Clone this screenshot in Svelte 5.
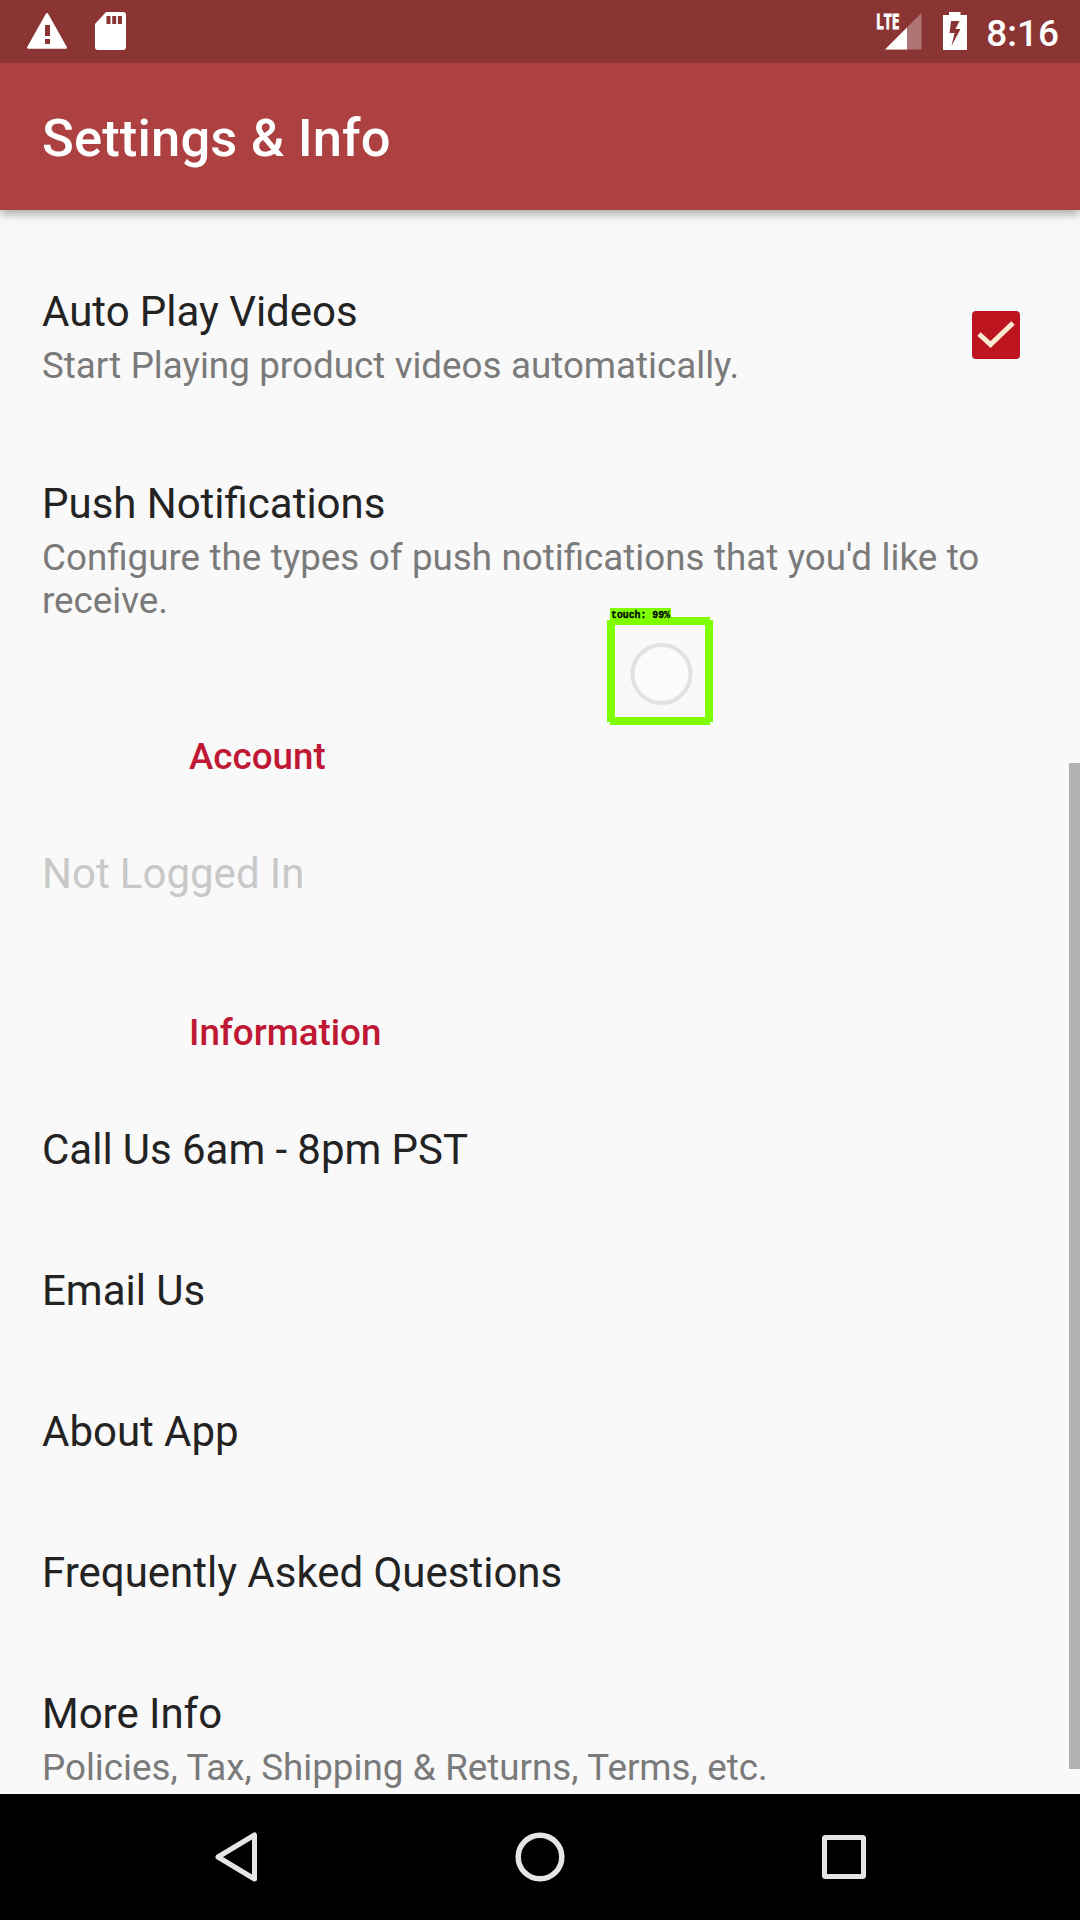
<script>
  const sections = [
    {
      heading: null,
      items: [
        { title: 'Auto Play Videos', summary: ['Start Playing product videos automatically.'], checked: true },
        { title: 'Push Notifications', summary: ["Configure the types of push notifications that you'd like to", 'receive.'] }
      ]
    },
    { heading: 'Account', items: [{ title: 'Not Logged In', disabled: true }] },
    {
      heading: 'Information',
      items: [
        { title: 'Call Us 6am - 8pm PST' },
        { title: 'Email Us' },
        { title: 'About App' },
        { title: 'Frequently Asked Questions' },
        { title: 'More Info', summary: ['Policies, Tax, Shipping & Returns, Terms, etc.'] }
      ]
    }
  ];
</script>

<div class="screen">
  <div class="status">
    <div class="group">
      <svg class="warn" width="40" height="36" viewBox="0 0 40 36">
        <path fill="#fff" fill-rule="evenodd" d="M19 .6q1-1.2 2 0L39.8 34q.4 1.6-1 1.8H1.200Q-.2 35.600.2 34ZM18 12v11h5V12Zm0 14v5h5v-5Z" />
      </svg>
      <svg class="sd" width="31" height="38" viewBox="0 0 31 38">
        <path fill="#fff" fill-rule="evenodd" d="M11 0h17q3 0 3 3v32q0 3-3 3H3q-3 0-3-3V12ZM11.500 4v8h4V4Zm5.700 0v8h4V4Zm5.700 0v8h4V4Z" />
      </svg>
    </div>
    <div class="group">
      <svg class="signal" width="47" height="42" viewBox="0 -4 47 42">
        <path fill="#fff" fill-opacity=".32" d="M45.500 0v36.500H9Z" />
        <path fill="#8a3433" d="M0 0h26v17H0Z" />
        <path fill="#fff" d="M31 14.500v22H9Z" />
        <text x="0" y="15.800" textLength="23.500" lengthAdjust="spacingAndGlyphs">LTE</text>
      </svg>
      <svg class="battery" width="24" height="38" viewBox="0 0 24 38">
        <path fill="#fff" fill-rule="evenodd" d="M6 0h11.500v3H24v35H0V3H6ZM8 9 6.500 21h5L8.500 34 17.500 17h-5L16.500 9Z" />
      </svg>
      <span class="time">8:16</span>
    </div>
  </div>

  <header><h1>Settings &amp; Info</h1></header>

  <main>
    {#each sections as section}
      {#if section.heading}
        <h2>{section.heading}</h2>
      {/if}
      {#each section.items as item}
        <div class="row" class:disabled={item.disabled}>
          <div class="copy">
            <div class="title">{item.title}</div>
            {#if item.summary}
              <div class="summary">
                {#each item.summary as line}<div>{line}</div>{/each}
              </div>
            {/if}
          </div>
          {#if item.checked}
            <svg class="check" width="48" height="48" viewBox="0 0 48 48">
              <rect width="48" height="48" rx="4" fill="#bd1620" />
              <path d="M7 23 18.500 33.500 41 12" fill="none" stroke="#fce9d2" stroke-width="5" />
            </svg>
          {/if}
        </div>
      {/each}
    {/each}
    <div class="scrollbar"></div>
  </main>

  <nav>
    <svg width="50" height="54" viewBox="0 0 50 54">
      <path d="M43.500 5v44L7 27Z" fill="none" stroke="#e5e5e5" stroke-width="5" stroke-linejoin="round" />
    </svg>
    <svg width="50" height="54" viewBox="0 0 50 54">
      <circle cx="25" cy="27" r="21.800" fill="none" stroke="#e5e5e5" stroke-width="5.500" />
    </svg>
    <svg width="50" height="54" viewBox="0 0 50 54">
      <rect x="5.500" y="7.500" width="39" height="39" rx="1" fill="none" stroke="#e5e5e5" stroke-width="5" stroke-linejoin="round" />
    </svg>
  </nav>

  <div class="touch">
    <svg width="108" height="120" viewBox="0 0 108 120">
      <circle cx="54.500" cy="67" r="29" fill="#fbfbfb" stroke="#e2e2e4" stroke-width="4" />
      <path d="M3 10h100v3h3v102h-3v3H3v-3H0V13h3ZM8 18v92h90V18Z" fill="#80ff00" fill-rule="evenodd" />
      <path d="M3 1h61v11H3Z" fill="#80ff00" />
      <text x="4" y="10.500" textLength="59" lengthAdjust="spacingAndGlyphs">touch: 99%</text>
    </svg>
  </div>
</div>

<style>
  :global(body) {
    margin: 0;
    background: #f9f9f9;
  }
  .screen {
    position: relative;
    display: flex;
    flex-direction: column;
    width: 1080px;
    height: 1920px;
    overflow: hidden;
    background: #f9f9f9;
    font-family: Roboto, 'Liberation Sans', sans-serif;
  }
  svg {
    display: block;
    flex: none;
  }
  .status {
    position: relative;
    z-index: 2;
    display: flex;
    justify-content: space-between;
    box-sizing: border-box;
    flex: none;
    height: 63px;
    padding: 12px 21px 0 27px;
    background: #8a3433;
  }
  .group {
    display: flex;
    align-items: flex-start;
  }
  .warn {
    margin: 1px 28px 0 0;
  }
  .signal {
    margin: -3px 20px 0 0;
    overflow: visible;
  }
  .signal text {
    font: 700 21px 'Open Sans', sans-serif;
    fill: #fff;
    stroke: #fff;
    stroke-width: 0.8px;
  }
  .battery {
    margin-right: 19px;
  }
  .time {
    color: #fff;
    font-size: 37px;
    font-weight: 500;
    line-height: 43px;
  }
  header {
    position: relative;
    z-index: 1;
    display: flex;
    align-items: center;
    box-sizing: border-box;
    flex: none;
    height: 147px;
    padding: 3px 0 0 42px;
    background: #ad4141;
    box-shadow: 0 4px 9px rgba(0, 0, 0, 0.32);
  }
  h1 {
    margin: 0;
    color: #fff;
    font-size: 52.5px;
    font-weight: 500;
    letter-spacing: 0.15px;
    line-height: 62px;
  }
  main {
    position: relative;
    flex: 1;
    min-height: 0;
    box-sizing: border-box;
    padding-top: 31px;
    overflow: hidden;
  }
  .row {
    display: flex;
    align-items: center;
    justify-content: space-between;
    padding: 46px 60px 46px 42px;
  }
  .check {
    margin-bottom: 4px;
  }
  .copy {
    white-space: nowrap;
  }
  .title {
    color: #232323;
    font-size: 42px;
    line-height: 49px;
    word-spacing: -0.2px;
  }
  .disabled .title {
    color: #c8c8c8;
  }
  .summary {
    margin-top: 8px;
    color: #7a7a7a;
    font-size: 36.75px;
    line-height: 43px;
    word-spacing: 0.35px;
  }
  h2 {
    margin: 0;
    padding: 67px 0 25px 189px;
    color: #bf1834;
    font-size: 36.75px;
    font-weight: 500;
    line-height: 43px;
  }
  .scrollbar {
    position: absolute;
    top: 553px;
    right: 0;
    width: 11px;
    height: 1006px;
    background: #b2b2b2;
  }
  nav {
    display: flex;
    align-items: center;
    justify-content: space-between;
    box-sizing: border-box;
    flex: none;
    height: 126px;
    padding: 0 211px;
    background: #000;
  }
  .touch {
    position: absolute;
    left: 607px;
    top: 607px;
  }
  .touch text {
    font: 700 10.5px 'Liberation Mono', monospace;
    fill: #000;
    stroke: #000;
    stroke-width: 0.3px;
  }
</style>
